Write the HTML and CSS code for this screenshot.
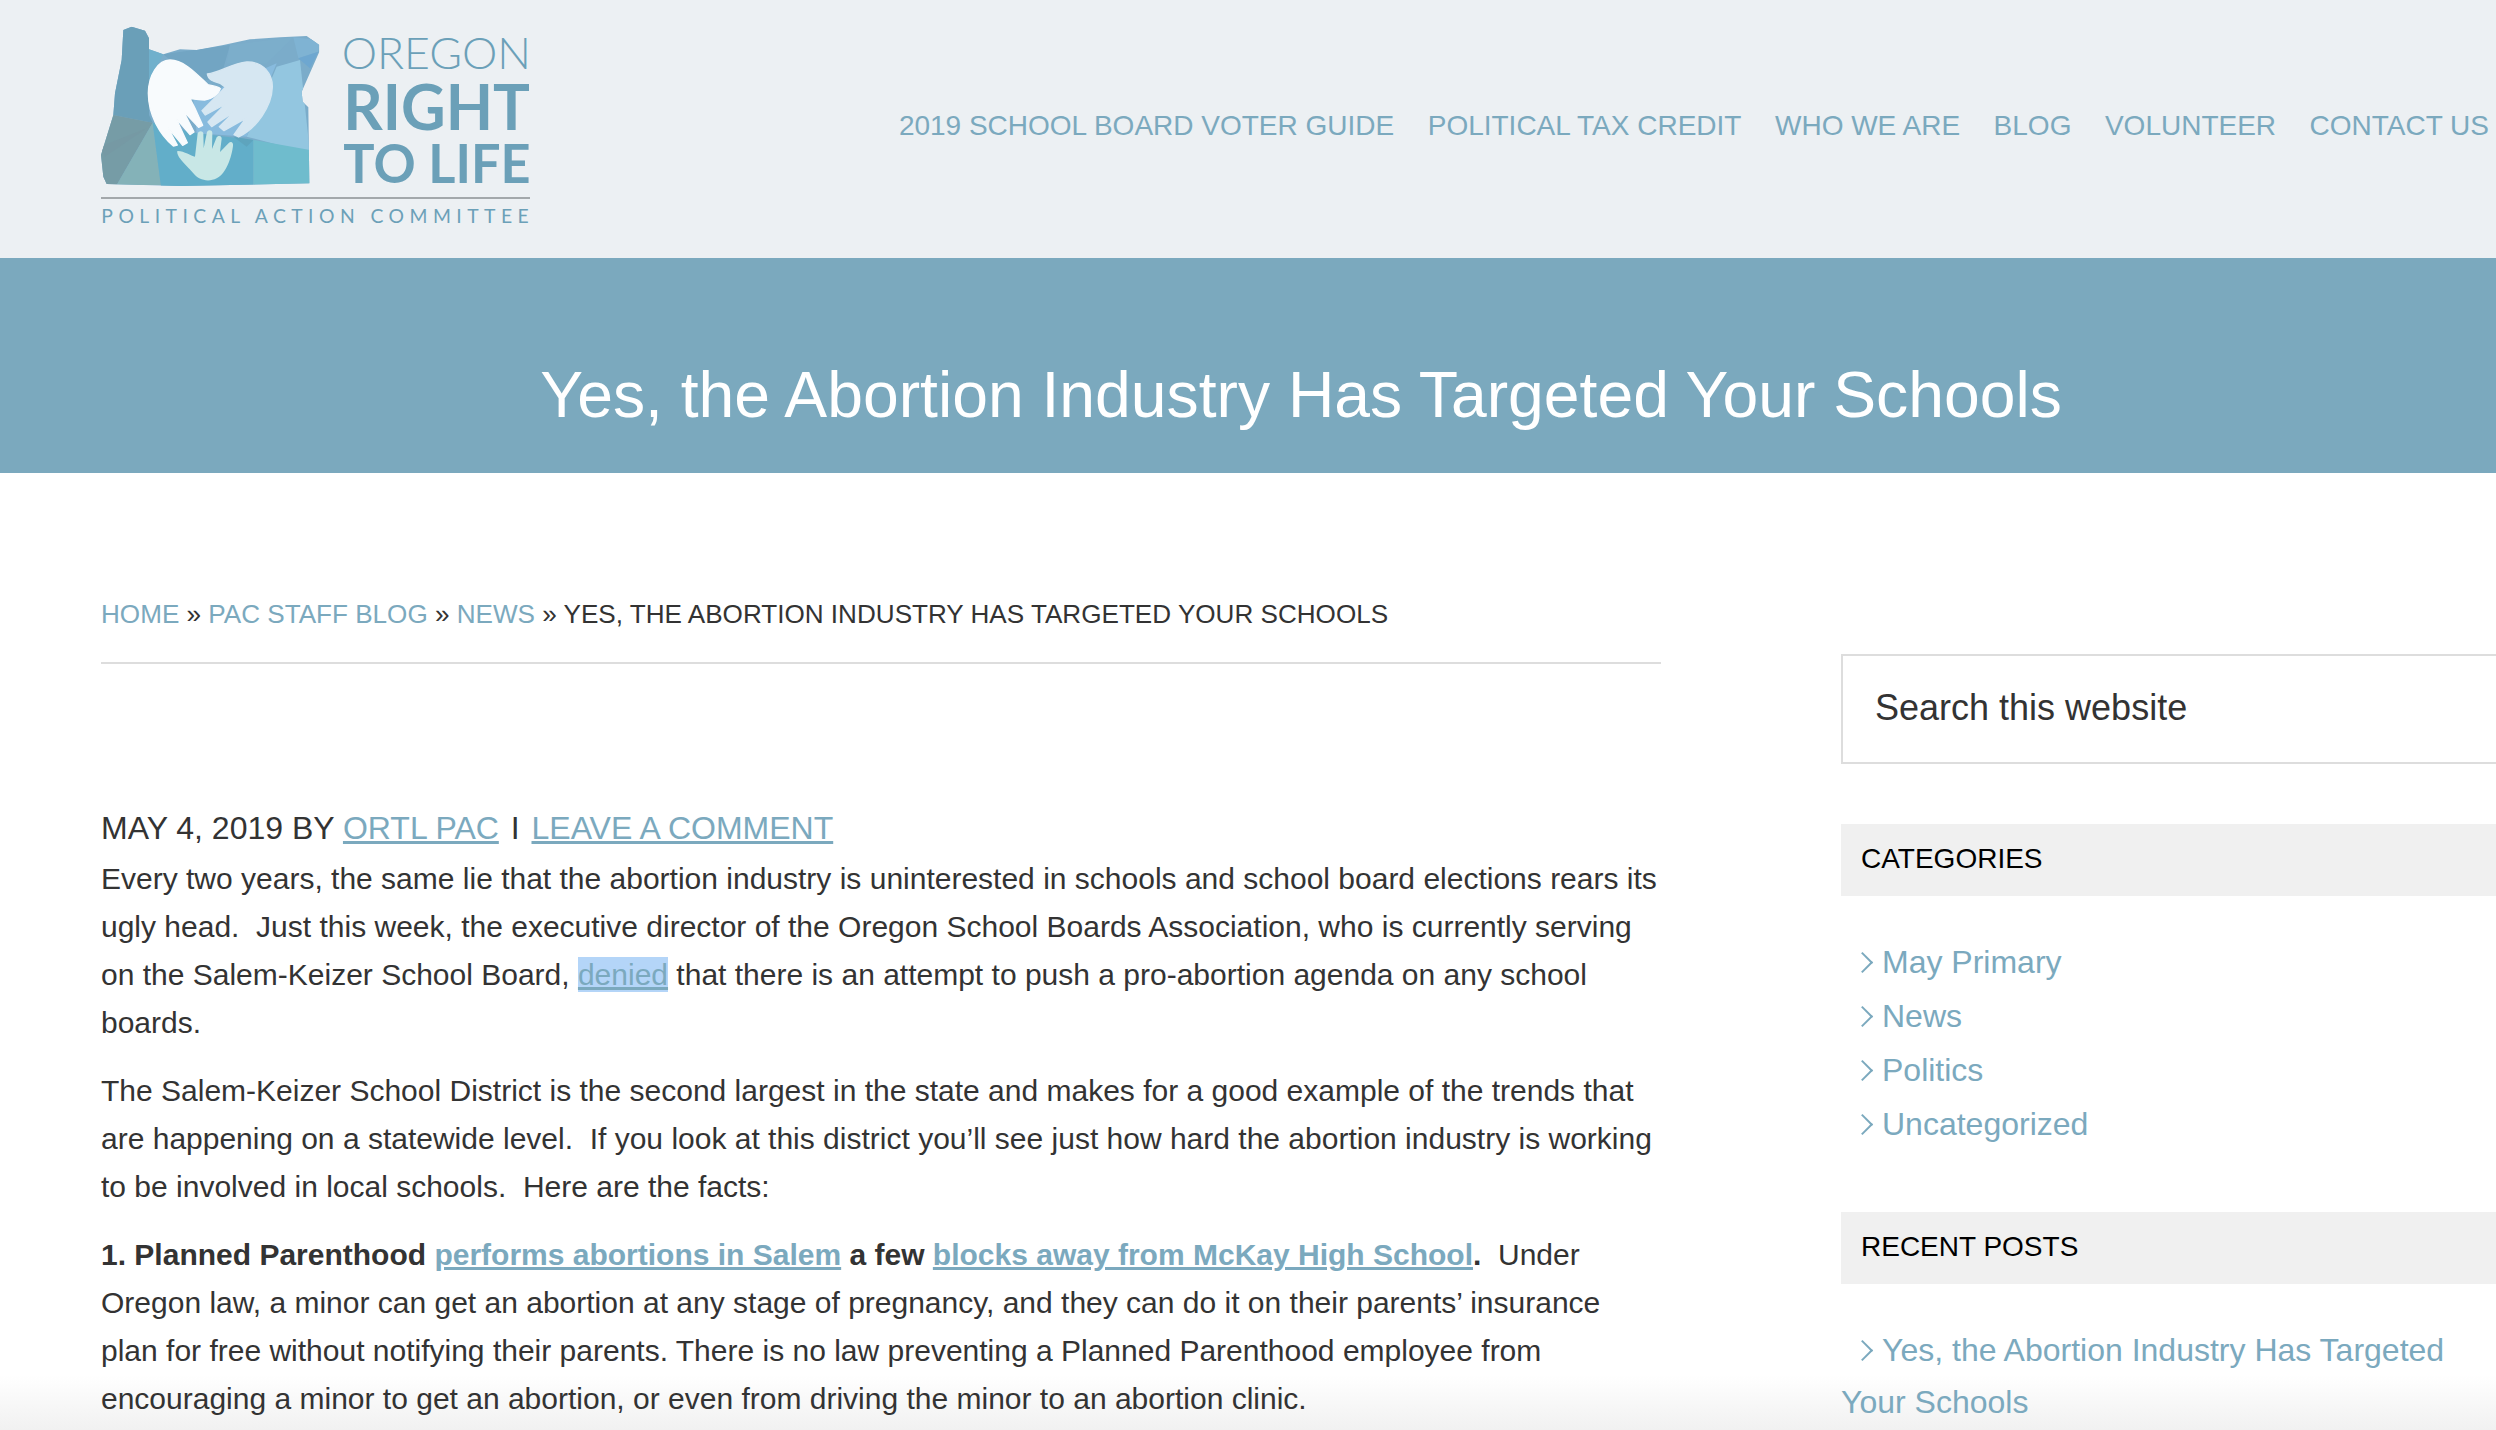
FILE: index.html
```html
<!DOCTYPE html>
<html lang="en">
<head>
<meta charset="utf-8">
<title>Yes, the Abortion Industry Has Targeted Your Schools</title>
<link rel="stylesheet" href="styles.css">
</head>
<body>
<div class="page">
<header class="site-header">
  <a class="logo" href="#" aria-label="Oregon Right to Life Political Action Committee">
    <svg class="logo-svg" viewBox="0 0 1440 750" width="480" height="250">
      <defs>
        <clipPath id="or"><path d="M130,90 L155,80 L195,92 L207,115 L207,148 L250,163 L300,148 L350,150 L430,135 L510,118 L600,112 L680,108 L718,135 L718,155 L665,275 L668,305 L685,322 L688,550 L300,558 L80,552 L70,530 L63,465 L100,345 L105,280 L125,180 Z"/></clipPath>
      </defs>
      <g clip-path="url(#or)">
        <rect x="50" y="70" width="680" height="500" fill="#7bacca"/>
        <path d="M50,70 H207 V345 L218,368 L100,345 H50 Z" fill="#6a9fb8"/>
        <path d="M207,140 L250,163 L230,200 L207,260 Z" fill="#70b0cc"/>
        <path d="M250,163 L450,135 L420,240 L340,240 Z" fill="#72a5c3"/>
        <path d="M450,135 L640,112 L560,190 L440,190 Z" fill="#7caecb"/>
        <path d="M640,112 L720,120 L715,155 L655,175 Z" fill="#7fb3d3"/>
        <path d="M655,175 L715,155 L690,205 Z" fill="#6ea7d0"/>
        <path d="M590,200 L660,180 L690,460 L500,410 Z" fill="#93c6e0"/>
        <path d="M340,300 L590,190 L500,410 L350,400 Z" fill="#88bbde"/>
        <path d="M50,345 L100,345 L218,368 L110,555 H50 Z" fill="#769ca6"/>
        <path d="M60,440 L200,385 L75,470 Z" fill="#7699a4"/>
        <path d="M218,368 L243,555 L110,555 Z" fill="#84b2b8"/>
        <path d="M218,368 L350,400 L520,420 L520,560 L243,560 Z" fill="#62aec9"/>
        <path d="M460,410 L520,420 L500,440 Z" fill="#5ea4bd"/>
        <path d="M520,420 L690,450 V560 H520 Z" fill="#6fbccd"/>
      </g>
      <path class="hand-b" d="M382,222 C420,218 455,190 500,186 C550,184 578,222 577,262 C575,320 530,385 476,411 L462,404 L497,355 L432,392 L418,380 L463,335 L395,380 L384,366 L437,312 L376,345 L366,332 L436,262 L420,250 C400,245 385,240 382,222 Z"/>
      <path class="hand-a" d="M270,180 C312,180 350,222 384,254 C398,258 414,258 421,266 C415,285 392,298 374,300 C358,300 342,296 330,296 L345,325 L368,376 L356,382 L310,333 L342,396 L330,404 L288,355 L322,428 L308,436 L263,382 L292,435 L280,438 C240,405 205,345 205,280 C205,225 235,180 270,180 Z"/>
      <path class="hand-c" d="M292,453 C312,452 332,468 345,470 L353,400 C357,392 368,392 370,400 L371,445 L381,396 C385,388 396,390 397,398 L396,447 L410,412 C416,404 426,408 425,416 L420,456 L447,428 C455,422 461,430 459,438 C455,470 440,520 410,535 C385,548 355,540 340,520 C325,500 288,472 292,453 Z"/>
      <text class="lg-oregon" x="785" y="207" textLength="568" lengthAdjust="spacingAndGlyphs">OREGON</text>
      <text class="lg-right" x="790" y="391" textLength="560" lengthAdjust="spacingAndGlyphs">RIGHT</text>
      <text class="lg-life" x="790" y="548" textLength="562" lengthAdjust="spacingAndGlyphs">TO LIFE</text>
      <rect x="63" y="591" width="1287" height="6" fill="#a3a8ab"/>
      <text class="lg-pac" x="64" y="669" textLength="1282">POLITICAL ACTION COMMITTEE</text>
    </svg>
  </a>
  <nav class="main-nav">
    <a href="#">2019 SCHOOL BOARD VOTER GUIDE</a>
    <a href="#">POLITICAL TAX CREDIT</a>
    <a href="#">WHO WE ARE</a>
    <a href="#">BLOG</a>
    <a href="#">VOLUNTEER</a>
    <a href="#">CONTACT US</a>
  </nav>
</header>
<section class="hero"><h1>Yes, the Abortion Industry Has Targeted Your Schools</h1></section>
<div class="columns">
  <main class="content">
    <div class="breadcrumb"><a href="#">HOME</a> » <a href="#">PAC STAFF BLOG</a> » <a href="#">NEWS</a> » YES, THE ABORTION INDUSTRY HAS TARGETED YOUR SCHOOLS</div>
    <p class="meta">MAY 4, 2019 BY <a href="#">ORTL PAC</a> <span class="sep">I</span> <a href="#">LEAVE A COMMENT</a></p>
    <p>Every two years, the same lie that the abortion industry is uninterested in schools and school board elections rears its ugly head.&nbsp; Just this week, the executive director of the Oregon School Boards Association, who is currently serving on the Salem-Keizer School Board, <a class="selected" href="#">denied</a> that there is an attempt to push a pro-abortion agenda on any school boards.</p>
    <p>The Salem-Keizer School District is the second largest in the state and makes for a good example of the trends that are happening on a statewide level.&nbsp; If you look at this district you’ll see just how hard the abortion industry is working to be involved in local schools.&nbsp; Here are the facts:</p>
    <p><strong>1. Planned Parenthood <a href="#">performs abortions in Salem</a> a few <a href="#">blocks away from McKay High School</a>.</strong>&nbsp; Under Oregon law, a minor can get an abortion at any stage of pregnancy, and they can do it on their parents’ insurance plan for free without notifying their parents. There is no law preventing a Planned Parenthood employee from encouraging a minor to get an abortion, or even from driving the minor to an abortion clinic.</p>
  </main>
  <aside class="sidebar">
    <div class="search">Search this website</div>
    <h3 class="widget-title">CATEGORIES</h3>
    <ul class="widget-list">
      <li><a href="#">May Primary</a></li>
      <li><a href="#">News</a></li>
      <li><a href="#">Politics</a></li>
      <li><a href="#">Uncategorized</a></li>
    </ul>
    <h3 class="widget-title">RECENT POSTS</h3>
    <ul class="widget-list">
      <li><a href="#">Yes, the Abortion Industry Has Targeted Your Schools</a></li>
    </ul>
  </aside>
</div>
</div>
</body>
</html>
```
FILE: styles.css
```css
* { box-sizing: border-box; }
html, body { margin: 0; padding: 0; height: 100%; overflow: hidden; }
body { background: #fff; color: #333; font-family: "Liberation Sans", Arial, sans-serif; }
a { color: #7ba9be; }
.page { width: 2496px; height: 1430px; overflow: hidden; background: linear-gradient(to bottom, #fff calc(100% - 55px), #f1f1f1 100%); }
.site-header { display: flex; align-items: flex-start; height: 258px; background: #ecf0f3; padding-left: 80px; }
.logo { display: block; width: 480px; height: 250px; }
.logo-svg { display: block; }
.hand-a { fill: #f8fbfd; stroke: #f8fbfd; stroke-width: 4; stroke-linejoin: round; }
.hand-b { fill: #d6e7f2; stroke: #d6e7f2; stroke-width: 4; stroke-linejoin: round; }
.hand-c { fill: #c8e7e6; }
.lg-oregon { font-family: Lato, sans-serif; font-weight: 300; font-size: 128px; fill: #6ba0b8; }
.lg-right { font-family: Lato, sans-serif; font-weight: 700; font-size: 190px; fill: #6ba0b8; }
.lg-life { font-family: Lato, sans-serif; font-weight: 700; font-size: 161px; fill: #6ba0b8; }
.lg-pac { font-family: Lato, sans-serif; font-size: 58px; fill: #6ba0b8; }
.main-nav { display: flex; gap: 33.5px; margin-left: auto; padding: 108px 7px 0 0; font-size: 28px; line-height: 36px; }
.main-nav a { text-decoration: none; white-space: nowrap; }
.hero { height: 215px; background: #7ba9be; display: flex; align-items: center; justify-content: center; padding: 58px 0 0 106px; }
.hero h1 { margin: 0; color: #fff; font-weight: 400; font-size: 64.25px; line-height: 80px; }
.columns { display: flex; padding: 0 0 0 101px; }
.content { flex: none; width: 1560px; padding-top: 121px; font-size: 30px; line-height: 48px; }
.content a { text-decoration: underline; }
.breadcrumb { font-size: 26.1px; line-height: 40px; padding-bottom: 28px; border-bottom: 2px solid #ddd; margin-bottom: 141px; }
.breadcrumb a { text-decoration: none; }
.content p { margin: 0 0 20px; }
.content .meta { font-size: 32px; line-height: 46px; margin: 0 0 4px; }
.sep { margin: 0 3px; }
.selected { background: #b4d5f8; padding: 1px 0; }
.sidebar { flex: none; width: 655px; margin-left: 180px; padding-top: 181px; }
.search { height: 110px; border: 2px solid #ddd; border-right: 0; padding-left: 32px; line-height: 104px; font-size: 36px; }
.widget-title { margin: 60px 0 0; height: 72px; background: #f0f0f0; color: #000; font-weight: 400; font-size: 28px; line-height: 70px; padding-left: 20px; }
.widget-list { list-style: none; margin: 0; padding: 40px 0 0; font-size: 32px; line-height: 52px; }
.widget-list li { padding-bottom: 2px; }
.widget-list li::before { content: ""; display: inline-block; width: 13px; height: 13px; margin: 0 12px 4px 14px; border-top: 2px solid #7ba9be; border-right: 2px solid #7ba9be; transform: rotate(45deg); vertical-align: middle; }
.widget-list a { text-decoration: none; }
```
